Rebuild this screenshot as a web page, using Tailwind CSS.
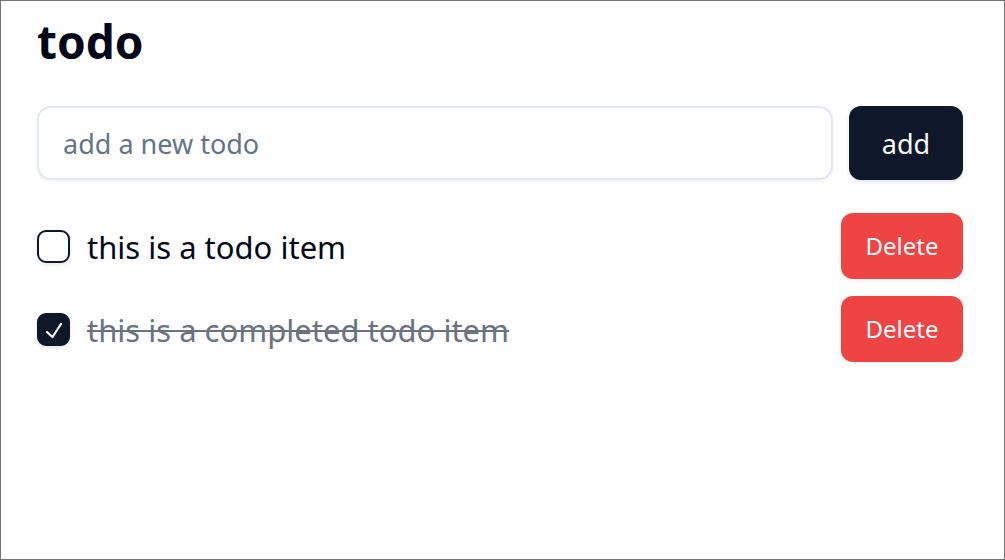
<!DOCTYPE html>
<html lang="en">
<head>
<meta charset="utf-8">
<meta name="viewport" content="width=device-width, initial-scale=1">
<title>todo</title>
<script src="https://cdn.jsdelivr.net/npm/@tailwindcss/browser@4"></script>
</head>
<body class="min-h-screen border border-[#757575] bg-white pr-[41px] pl-9 font-['Noto_Sans',sans-serif] text-[#020817]">
<main>
  <h1 class="pt-2 text-[46px] leading-16 font-bold">todo</h1>
  <form class="mt-[33px] flex gap-4">
    <input type="text" aria-label="New todo" placeholder="add a new todo" class="h-[74px] min-w-0 flex-1 rounded-[14px] border-2 border-[#e2e8f0] bg-white px-6 text-[27px] shadow-[0_2px_4px_rgb(0_0_0/0.05)] placeholder:text-[#64748b]">
    <button type="button" class="h-[74px] w-[114px] rounded-xl bg-[#0f172a] pt-0.5 text-[27px] text-[#f8fafc] shadow-[0_2px_4px_rgb(0_0_0/0.1)]">add</button>
  </form>
  <ul class="mt-[33px] flex flex-col gap-[17px]">
    <li class="flex h-[66px] items-center gap-[17px]">
      <span class="relative flex size-[33px]">
        <input id="t1" type="checkbox" class="size-[33px] appearance-none rounded-[9px] border-2 border-[#0f172a] shadow-[0_2px_4px_rgb(0_0_0/0.1)] checked:bg-[#0f172a]">
      </span>
      <label for="t1" class="flex-1 pt-0.5 text-[31px] leading-12">this is a todo item</label>
      <button type="button" class="h-[66px] w-[122px] rounded-xl bg-[#ef4444] text-2xl text-[#f8fafc] shadow-[0_2px_4px_rgb(0_0_0/0.05)]">Delete</button>
    </li>
    <li class="flex h-[66px] items-center gap-[17px]">
      <span class="relative flex size-[33px]">
        <input id="t2" type="checkbox" checked class="size-[33px] appearance-none rounded-[9px] border-2 border-[#0f172a] shadow-[0_2px_4px_rgb(0_0_0/0.1)] checked:bg-[#0f172a]">
        <svg class="pointer-events-none absolute inset-0 size-full" viewBox="0 0 33 33" fill="none" stroke="#fff" stroke-width="2.2" stroke-linecap="round" stroke-linejoin="round" aria-hidden="true"><path d="M10 19l5.500 5 8.500-13"/></svg>
      </span>
      <label for="t2" class="flex-1 pt-0.5 text-[31px] leading-12 text-[#6b7280] line-through decoration-2">this is a completed todo item</label>
      <button type="button" class="h-[66px] w-[122px] rounded-xl bg-[#ef4444] text-2xl text-[#f8fafc] shadow-[0_2px_4px_rgb(0_0_0/0.05)]">Delete</button>
    </li>
  </ul>
</main>
</body>
</html>
